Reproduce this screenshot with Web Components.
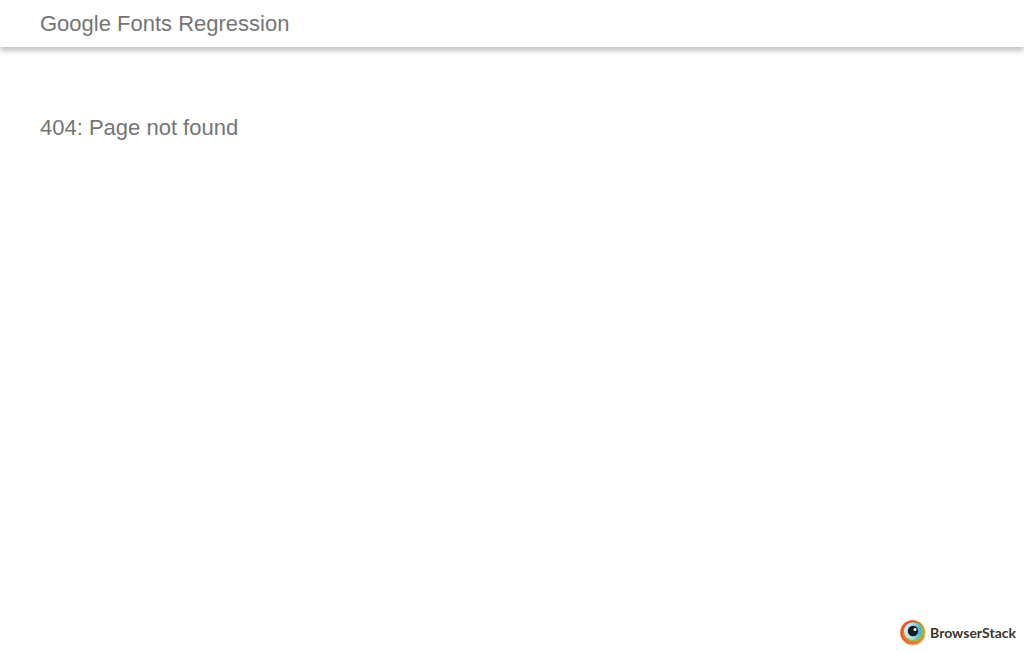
<!DOCTYPE html>
<html lang="en">
<head>
<meta charset="utf-8">
<meta name="viewport" content="width=device-width, initial-scale=1">
<title>Google Fonts Regression</title>
<style>
  body { margin: 0; background: #fff; color: #757575; font: 22px/26px "Liberation Sans", Arial, sans-serif; }
</style>
</head>
<body>
<regression-page>
  <top-bar slot="header">Google Fonts Regression</top-bar>
  <page-message>404: Page not found</page-message>
  <sponsor-logo slot="footer">BrowserStack</sponsor-logo>
</regression-page>
<script>
  const define = (name, markup) => customElements.define(name, class extends HTMLElement {
    constructor() {
      super();
      this.attachShadow({ mode: "open" }).innerHTML = markup;
    }
  });

  define("regression-page", `
    <style>
      :host { display: flex; flex-direction: column; min-height: 100vh; }
      main { flex: 1; padding: 68px 40px; }
      footer { display: flex; justify-content: flex-end; padding: 6px 8px; }
    </style>
    <slot name="header"></slot>
    <main><slot></slot></main>
    <footer><slot name="footer"></slot></footer>`);

  define("top-bar", `
    <style>
      :host { display: block; }
      header { padding: 11px 40px 10px; background: #fff; box-shadow: 0 4px 5px rgba(0, 0, 0, .23); }
      h1 { margin: 0; font: inherit; }
    </style>
    <header><h1><slot></slot></h1></header>`);

  define("page-message", `
    <style>
      :host { display: block; }
      p { margin: 0; }
    </style>
    <p><slot></slot></p>`);

  define("sponsor-logo", `
    <style>
      :host { display: block; }
      a { display: flex; align-items: center; gap: 4px; color: #3b342a; text-decoration: none;
          font: 700 14px/26px Lato, sans-serif; }
      svg { display: block; width: 26px; height: 26px; }
    </style>
    <a href="https://www.browserstack.com/">
      <svg viewBox="0 0 26 26" aria-hidden="true">
        <defs>
          <linearGradient id="iris" x1="0" y1="0" x2="1" y2="0">
            <stop offset="0" stop-color="#d6edf5"/><stop offset=".5" stop-color="#a5dcea"/><stop offset="1" stop-color="#38b0d0"/>
          </linearGradient>
        </defs>
        <circle cx="13" cy="13" r="12.8" fill="#f7c46c"/>
        <circle cx="12.4" cy="12.2" r="12" fill="#e4572e"/>
        <circle cx="13.4" cy="12.9" r="10.8" fill="#ef7a35"/>
        <circle cx="14" cy="12" r="9.8" fill="#83c44f"/>
        <circle cx="12.8" cy="11.2" r="8.7" fill="url(#iris)"/>
        <circle cx="13" cy="11" r="5.2" fill="#171c24"/>
        <circle cx="15" cy="9.5" r="1.5" fill="#fff"/>
      </svg>
      <span><slot></slot></span>
    </a>`);
</script>
</body>
</html>
